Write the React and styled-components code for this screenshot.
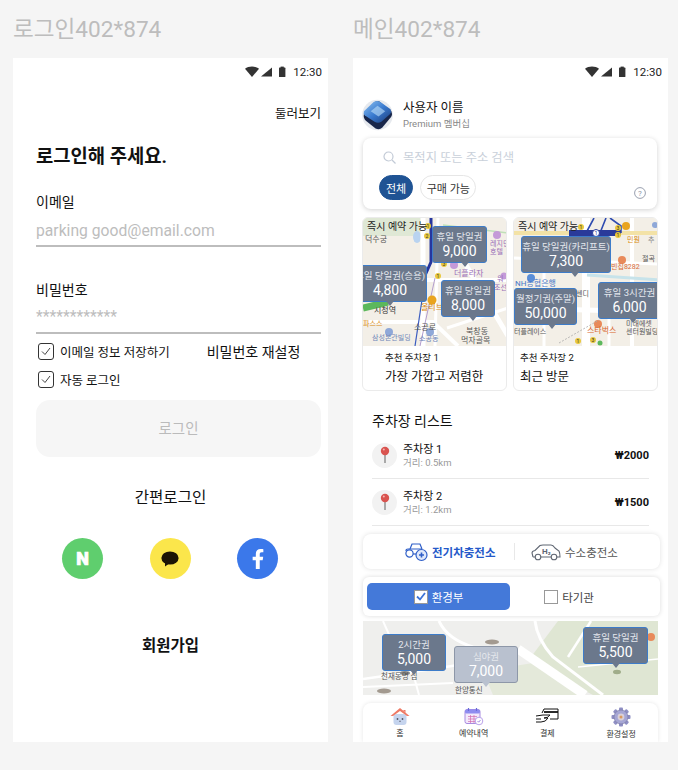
import React from 'react'
import styled, { createGlobalStyle } from 'styled-components'
import { FaFacebookF } from 'react-icons/fa'

const GlobalStyle = createGlobalStyle`
    html, body {
        margin: 0;
        padding: 0;
        background: #f5f5f5;
    }
    * {
        box-sizing: border-box;
    }
    body {
        font-family: Roboto, "Noto Sans CJK KR", sans-serif;
        color: #111;
    }
`

const Page = styled.div`
    width: 678px;
    height: 770px;
    padding: 0 10px 0 13px;
    display: flex;
    gap: 25px;
    overflow: hidden;
`

const Column = styled.div`
    width: 315px;
    flex: 0 0 auto;
`

const ArtboardTitle = styled.div`
    height: 58px;
    padding-top: 15px;
    font-size: 22.6px;
    line-height: 30px;
    color: #bdbdbd;
`

const Panel = styled.div`
    height: 684px;
    background: #fff;
    overflow: hidden;
`

const StatusRow = styled.div`
    height: 24px;
    padding: 4px 6px 0 0;
    display: flex;
    align-items: center;
    justify-content: flex-end;
    gap: 6px;
    font-size: 11.5px;
    color: #222;
`

/* login */

const LoginBody = styled.div`
    padding: 0 7px 0 23px;
`

const BrowseLink = styled.div`
    margin-top: 23px;
    text-align: right;
    font-size: 12.5px;
    line-height: 18px;
`

const LoginTitle = styled.h1`
    margin: 21px 0 0;
    font-size: 18.8px;
    line-height: 26px;
    font-weight: 700;
`

const FieldLabel = styled.div`
    margin-top: ${({ $top }) => $top}px;
    font-size: 14px;
    line-height: 20px;
`

const FieldValue = styled.div`
    height: ${({ $h }) => $h}px;
    padding-top: ${({ $pt }) => $pt || 0}px;
    display: flex;
    align-items: center;
    border-bottom: 2px solid #bdbdbd;
    font-size: 15.7px;
    color: #bdbdbd;
`

const CheckRow = styled.div`
    height: 28px;
    display: flex;
    align-items: center;
    font-size: 12.5px;
`

const CheckBox = styled.span`
    width: 16px;
    height: 17px;
    margin: 0 6px 0 2px;
    border: 1px solid #333;
    border-radius: 3px;
    display: flex;
    align-items: center;
    justify-content: center;
`

const ResetLink = styled.span`
    margin-left: 37px;
    font-size: 14px;
`

const CheckGroup = styled.div`
    margin-top: 3px;
`

const LoginButton = styled.div`
    height: 57px;
    margin-top: 7px;
    border-radius: 14px;
    background: #f6f6f6;
    color: #bbb;
    font-size: 14.5px;
    padding-bottom: 2px;
    display: flex;
    align-items: center;
    justify-content: center;
`

const SimpleLogin = styled.div`
    margin-top: 30px;
    padding-right: 16px;
    text-align: center;
    font-size: 15.6px;
    line-height: 22px;
`

const SocialRow = styled.div`
    margin-top: 29px;
    padding: 0 43px 0 26px;
    display: flex;
    justify-content: space-between;
`

const SocialCircle = styled.div`
    width: 41px;
    height: 41px;
    border-radius: 50%;
    background: ${({ $bg }) => $bg};
    color: #fff;
    display: flex;
    align-items: center;
    justify-content: center;
    font-size: ${({ $size }) => $size || 20}px;
    font-weight: 900;
`

const NaverLetter = styled.span`
    -webkit-text-stroke: 0.7px #fff;
`

const SignUp = styled.div`
    margin-top: 56px;
    padding-right: 16px;
    text-align: center;
    font-size: 15.5px;
    font-weight: 700;
    line-height: 22px;
`

/* main */

const ProfileRow = styled.div`
    margin-top: 17px;
    padding-left: 9px;
    display: flex;
    align-items: center;
    gap: 10px;
    height: 32px;
`

const ProfileName = styled.div`
    font-size: 12.5px;
    line-height: 17px;
`

const ProfileSub = styled.div`
    margin-top: 1px;
    font-size: 9.5px;
    line-height: 14px;
    color: #888;
`

const SearchCard = styled.div`
    margin: 7px 11px 0 10px;
    height: 71px;
    padding: 10px 11px 0 16px;
    border-radius: 8px;
    background: #fff;
    box-shadow: 0 1px 5px rgba(0, 0, 0, 0.18);
`

const SearchLine = styled.div`
    height: 18px;
    padding-left: 4px;
    display: flex;
    align-items: center;
    gap: 7px;
    font-size: 12.3px;
    color: #c9d0da;
`

const ChipRow = styled.div`
    margin-top: 9px;
    display: flex;
    align-items: center;
    gap: 7px;
`

const Chip = styled.div`
    height: 25px;
    padding: 0 ${({ $active }) => ($active ? 6 : 5.5)}px;
    border-radius: 13px;
    border: 1px solid ${({ $active }) => ($active ? '#1f5394' : '#e6e6e6')};
    background: ${({ $active }) => ($active ? '#1f5394' : '#fff')};
    color: ${({ $active }) => ($active ? '#fff' : '#333')};
    font-size: 11px;
    display: flex;
    align-items: center;
`

const HelpIcon = styled.div`
    margin: 10px 0 0 auto;
    display: flex;
`

const CardRow = styled.div`
    margin-top: 8px;
    padding: 0 10px 0 9px;
    display: flex;
    gap: 6px;
`

const PlaceCard = styled.div`
    width: 145px;
    height: 174px;
    border: 1px solid #ebebeb;
    border-radius: 6px;
    overflow: hidden;
    background: #fff;
`

const MapFrame = styled.div`
    position: relative;
    height: ${({ $h }) => $h}px;
    overflow: hidden;
    background: #f3efe7;

    & > svg {
        display: block;
    }
`

const InstantBadge = styled.span`
    position: absolute;
    left: 4px;
    top: 2px;
    font-size: 10px;
    line-height: 14px;
    color: #222;
`

const Bubble = styled.div`
    position: absolute;
    left: ${({ $x }) => $x}px;
    top: ${({ $y }) => $y}px;
    width: ${({ $w }) => $w}px;
    height: 37px;
    padding-top: 3px;
    border: 1px solid ${({ $muted }) => ($muted ? '#8d97a8' : '#3d7cc9')};
    border-radius: 3px;
    background: ${({ $muted }) => ($muted ? '#b9c1cf' : '#6b788c')};
    text-align: center;
    color: #fff;
    white-space: nowrap;

    &::after {
        content: '';
        position: absolute;
        left: calc(${({ $tip }) => $tip || 50}% - 4px);
        bottom: -5px;
        border-left: 4px solid transparent;
        border-right: 4px solid transparent;
        border-top: 5px solid ${({ $muted }) => ($muted ? '#b9c1cf' : '#6b788c')};
    }
`

const BubbleLabel = styled.div`
    font-size: 9.5px;
    line-height: 13px;
    color: #e4e7ec;
    margin: 0 -12px;
`

const BubblePrice = styled.div`
    font-size: 14px;
    line-height: 17px;
`

const CardText = styled.div`
    padding: 5px 0 0 ${({ $pad }) => $pad}px;
`

const CardEyebrow = styled.div`
    font-size: 9.5px;
    line-height: 14px;
`

const CardTitle = styled.div`
    margin-top: 3px;
    font-size: 12.5px;
    line-height: 18px;
`

const SectionTitle = styled.div`
    margin-top: 20px;
    padding-left: 19px;
    font-size: 14px;
    line-height: 20px;
`

const List = styled.div`
    margin: 1px 19px 0 19px;
`

const ListRow = styled.div`
    height: 47px;
    display: flex;
    align-items: center;
    border-bottom: 1px solid #e8e8e8;
`

const PinCircle = styled.div`
    width: 25px;
    height: 25px;
    margin-right: 6px;
    border-radius: 50%;
    background: #f2f2f2;
    display: flex;
    align-items: center;
    justify-content: center;
`

const RowName = styled.div`
    font-size: 11px;
    line-height: 15px;
`

const RowSub = styled.div`
    font-size: 9.5px;
    line-height: 12px;
    color: #999;
`

const RowPrice = styled.div`
    margin-left: auto;
    font-size: 11px;
    font-weight: 700;
`

const StationTabs = styled.div`
    margin: 8px 8px 0 10px;
    height: 35px;
    border-radius: 8px;
    background: #fff;
    box-shadow: 0 0 5px rgba(0, 0, 0, 0.12);
    display: flex;
    align-items: center;
`

const StationTab = styled.div`
    width: ${({ $w }) => $w}px;
    padding-left: ${({ $pad }) => $pad}px;
    display: flex;
    align-items: center;
    gap: 4px;
    font-size: 11.5px;
    font-weight: ${({ $active }) => ($active ? 700 : 400)};
    color: ${({ $active }) => ($active ? '#2459c9' : '#555')};
`

const TabRule = styled.div`
    width: 1px;
    height: 17px;
    background: #e8e8e8;
`

const AgencyToggle = styled.div`
    margin: 8px 8px 0 10px;
    height: 39px;
    padding: 6px 4px;
    border-radius: 6px;
    background: #fff;
    box-shadow: 0 0 5px rgba(0, 0, 0, 0.14);
    display: flex;
`

const AgencyOption = styled.div`
    width: ${({ $w }) => $w}px;
    flex: 0 0 auto;
    border-radius: 5px;
    background: ${({ $active }) => ($active ? '#4479d9' : '#fff')};
    color: ${({ $active }) => ($active ? '#fff' : '#444')};
    font-size: 11.5px;
    display: flex;
    align-items: center;
    justify-content: center;
    gap: 4px;
`

const AgencyBox = styled.span`
    width: 14px;
    height: 14px;
    border: 1px solid #999;
    background: #fff;
    display: flex;
    align-items: center;
    justify-content: center;
`

const WideMap = styled(MapFrame)`
    margin: 5px 10px 0 10px;
    background: #efefed;
`

const BottomNav = styled.div`
    margin: 8px 10px 0 10px;
    height: 39px;
    border-radius: 8px 8px 0 0;
    box-shadow: 0 0 4px rgba(0, 0, 0, 0.1);
    display: grid;
    grid-template-columns: repeat(4, 1fr);
`

const NavItem = styled.div`
    display: flex;
    flex-direction: column;
    align-items: center;
    padding-top: 4px;
    font-size: 8px;
    line-height: 11px;
    color: #333;

    & > svg {
        margin-bottom: 2px;
    }
`

const StatusIcons = () => (
    <svg width="42" height="12" viewBox="0 0 42 12">
        <path d="M0 2.8 C3.5 -0.2 10.5 -0.2 14 2.8 L7 11 Z" fill="#333" />
        <path d="M16 10.5 L27 10.5 L27 1.5 Z" fill="#333" />
        <rect x="34" y="1.6" width="6.4" height="9.4" rx="0.6" fill="#333" />
        <rect x="35.6" y="0.6" width="3.2" height="1.5" fill="#333" />
    </svg>
)

const Tick = () => (
    <svg width="10" height="9" viewBox="0 0 10 9">
        <path d="M1 4.5 L4 7.5 L9 1" fill="none" stroke="#444" strokeWidth="1" />
    </svg>
)

const Pin = () => (
    <svg width="10" height="18" viewBox="0 0 10 18">
        <path d="M5 8 L5 17" stroke="#8a8a8a" strokeWidth="1.4" />
        <circle cx="5" cy="5" r="4.2" fill="#d9534f" />
        <circle cx="3.8" cy="3.6" r="1" fill="#f3b5b2" />
    </svg>
)

const Avatar = () => (
    <svg width="31" height="32" viewBox="0 0 32 32">
        <defs>
            <linearGradient id="av" x1="0" y1="0" x2="1" y2="1">
                <stop offset="0" stopColor="#8fc2f0" />
                <stop offset="0.5" stopColor="#3a7bd0" />
                <stop offset="1" stopColor="#1a3a78" />
            </linearGradient>
        </defs>
        <circle cx="16" cy="16" r="15.8" fill="#e6e9ee" />
        <path d="M2 15 Q1 19 4 22 L14 30 Q18 32 21 29 L30 18 Q32 15 30 12 L18 2 Q15 1 13 3 Z" fill="#18264a" />
        <path d="M2 12 L12 2.5 Q15.5 0.5 19 2.5 L29.5 10 Q31 12.5 29 15 L20 23 Q16.5 25 13 23 L3 16.5 Q1 14.5 2 12 Z" fill="url(#av)" />
        <path d="M9 12 L16 6.5 L24 12 L17 17.5 Z" fill="#b5d8f6" opacity="0.65" />
    </svg>
)

const MapDot = ({ x, y, c, t }) => (
    <g>
        <circle cx={x} cy={y} r="3" fill={c} />
        {t && <text x={x} y={y + 2} fontSize="5" textAnchor="middle" fill="#333">{t}</text>}
    </g>
)

const MapText = ({ x, y, c = '#555', s = 7.5, children }) => (
    <text x={x} y={y} fontSize={s} fill={c}>{children}</text>
)

const CityMapOne = () => (
    <svg width="145" height="128" viewBox="0 0 145 128">
        <rect width="145" height="128" fill="#f3efe7" />
        <rect width="62" height="18" fill="#dfe8d5" />
        <ellipse cx="54" cy="19" rx="4" ry="6" fill="#b9d3f0" />
        <g stroke="#fff" fill="none">
            <path d="M60 0 L60 128" strokeWidth="5" />
            <path d="M0 62 L145 62" strokeWidth="4" />
            <path d="M100 42 L145 118" strokeWidth="5" />
            <path d="M0 104 L70 104 L95 128" strokeWidth="4" />
            <path d="M75 0 L72 128" strokeWidth="3" />
            <path d="M84 110 L145 90" strokeWidth="3" />
        </g>
        <path d="M80 7 L145 15" stroke="#bfe0b8" strokeWidth="1.5" fill="none" />
        <path d="M0 90 L25 84" stroke="#5cb85c" strokeWidth="7" fill="none" />
        <path d="M68 0 L68 44 L60 62" stroke="#26369e" strokeWidth="3" fill="none" />
        <path d="M62 62 L52 128" stroke="#3a5cc0" strokeWidth="1.2" fill="none" />
        <path d="M72 60 L57 128" stroke="#b29ccd" strokeWidth="1" fill="none" />
        <path d="M0 70 L8 82" stroke="#f0c27a" strokeWidth="6" fill="none" />
        <MapDot x={65} y={8} c="#e9c83b" t="1" />
        <MapDot x={64} y={18} c="#e9c83b" t="2" />
        <MapDot x={81} y={46} c="#e9c83b" t="3" />
        <MapDot x={75} y={58} c="#e9c83b" t="1" />
        <circle cx="134" cy="17" r="4" fill="#c49ad8" />
        <circle cx="91" cy="47" r="4" fill="#c49ad8" />
        <circle cx="69" cy="82" r="4.5" fill="#e9a41f" />
        <circle cx="26" cy="114" r="4" fill="#8fa8d8" />
        <circle cx="67" cy="114" r="4" fill="#8fa8d8" />
        <circle cx="141" cy="58" r="3.5" fill="#c49ad8" />
        <MapText x={2} y={24} s={8}>덕수궁</MapText>
        <MapText x={127} y={28} s={7} c="#9a6fb8">레지던스</MapText>
        <MapText x={127} y={36} s={7} c="#9a6fb8">호텔</MapText>
        <MapText x={91} y={58} s={8} c="#9a6fb8">더플라자</MapText>
        <MapText x={11} y={95} s={8} c="#333">시청역</MapText>
        <MapText x={58} y={92} s={8} c="#d98a10">올리브영</MapText>
        <MapText x={0} y={108} s={7} c="#d98a10">파스스</MapText>
        <MapText x={9} y={122} s={7} c="#6f86b8">삼성본관빌딩</MapText>
        <MapText x={56} y={123} s={7} c="#6f86b8">소공동</MapText>
        <MapText x={51} y={112} s={8}>소공로</MapText>
        <MapText x={103} y={116} s={8}>북창동</MapText>
        <MapText x={98} y={125} s={8}>먹자골목</MapText>
        <MapText x={134} y={63} s={7} c="#9a6fb8">워</MapText>
        <MapText x={131} y={72} s={7} c="#9a6fb8">조선</MapText>
    </svg>
)

const CityMapTwo = () => (
    <svg width="145" height="128" viewBox="0 0 145 128">
        <rect width="145" height="128" fill="#f3efe7" />
        <g stroke="#fff" fill="none">
            <path d="M72 0 L72 128" strokeWidth="8" />
            <path d="M0 40 L145 46" strokeWidth="3" />
            <path d="M0 90 L145 94" strokeWidth="5" />
            <path d="M118 0 L118 128" strokeWidth="4" />
            <path d="M30 40 L30 128" strokeWidth="3" />
            <path d="M95 96 L95 128" strokeWidth="3" />
        </g>
        <rect y="13" width="145" height="4" fill="#f3e2a6" />
        <path d="M73 57 L145 62" stroke="#c7e3ea" strokeWidth="3" fill="none" />
        <path d="M72 15 L80 0 M86 15 L92 0 M107 15 L107 8 L96 0" stroke="#2f4cb0" strokeWidth="1.6" fill="none" />
        <rect x="55" y="12" width="52" height="6" fill="#2a3a9a" />
        <circle cx="82" cy="15" r="3.5" fill="#fff" stroke="#2a3a9a" />
        <text x="82" y="17" fontSize="5.5" textAnchor="middle" fill="#2a3a9a">1</text>
        <MapDot x={67} y={9} c="#e9c83b" t="1" />
        <MapDot x={104} y={10} c="#e9c83b" t="3" />
        <MapDot x={104} y={17} c="#e9c83b" t="1" />
        <MapDot x={64} y={123} c="#e9c83b" t="1" />
        <MapDot x={79} y={122} c="#e9c83b" t="3" />
        <circle cx="86" cy="125" r="2.5" fill="#5cb85c" />
        <circle cx="112" cy="8" r="4" fill="#e9a41f" />
        <circle cx="108" cy="42" r="4" fill="#e88a5a" />
        <circle cx="17" cy="60" r="4" fill="#5a8ed8" />
        <circle cx="84" cy="106" r="4" fill="#e88a5a" />
        <circle cx="141" cy="7" r="3" fill="#8fa8d8" />
        <path d="M45 125 L85 102" stroke="#aaa" strokeWidth="0.8" strokeDasharray="2 1.5" fill="none" />
        <MapText x={113} y={24} s={7} c="#d98a10">민원</MapText>
        <MapText x={134} y={24} s={7} c="#888">추</MapText>
        <MapText x={128} y={43} s={7}>절곡</MapText>
        <MapText x={97} y={51} s={7} c="#d96a3a">빈집8282</MapText>
        <MapText x={1} y={68} s={8} c="#4a78c8">NH농협은행</MapText>
        <MapText x={62} y={78} s={7}>센디</MapText>
        <MapText x={0} y={116} s={7}>터플레이스</MapText>
        <MapText x={73} y={115} s={8} c="#d9662e">스타벅스</MapText>
        <MapText x={112} y={108} s={7}>미래에셋</MapText>
        <MapText x={112} y={116} s={7}>센터원빌딩</MapText>
    </svg>
)

const AreaMap = () => (
    <svg width="295" height="74" viewBox="0 0 295 74">
        <rect width="295" height="74" fill="#efefed" />
        <path d="M165 40 L195 0 L295 0 L295 74 L230 74 Z" fill="#dfe6d3" />
        <path d="M120 50 L170 42 L215 74 L130 74 Z" fill="#e4e9da" />
        <g stroke="#fff" fill="none">
            <path d="M155 28 L222 74" strokeWidth="9" />
            <path d="M76 0 Q84 18 110 26 L155 28" strokeWidth="3" />
            <path d="M172 0 Q174 18 190 36 L240 74" strokeWidth="3" />
            <path d="M228 0 Q214 22 205 36" strokeWidth="2.5" />
            <path d="M0 58 L70 48 L120 40" strokeWidth="2.5" />
            <path d="M0 66 L90 62" strokeWidth="2" />
            <path d="M20 0 L36 36 M50 52 L56 74" strokeWidth="2" />
            <path d="M215 46 L295 38" strokeWidth="1.5" />
        </g>
        <ellipse cx="129" cy="21" rx="7" ry="2.5" fill="#a39a90" />
        <ellipse cx="21" cy="70" rx="7" ry="2.5" fill="#a39a90" />
        <ellipse cx="254" cy="51" rx="4" ry="2.2" fill="#a0ad8a" />
        <ellipse cx="42" cy="52" rx="5" ry="2" fill="#888" />
        <circle cx="288" cy="16" r="4" fill="#e88a5a" />
        <MapText x={18} y={58} s={7.5}>천재동명 심</MapText>
        <MapText x={92} y={72} s={7.5}>한양통신</MapText>
    </svg>
)

const EvIcon = () => (
    <svg width="24" height="20" viewBox="0 0 24 20" fill="none" stroke="#2f5fc8" strokeWidth="1.2">
        <path d="M6 7 L8 2 L16 2 L18 7" />
        <path d="M2 9 Q2 7 4 7 L18 7" />
        <circle cx="5.5" cy="11.5" r="3.6" />
        <circle cx="17.5" cy="13" r="5.5" fill="#dfe8fb" />
        <path d="M15 13 L20 13 M17.5 10.5 L17.5 15.5" strokeWidth="1.6" />
        <path d="M9 12 L12 12" />
    </svg>
)

const H2Icon = () => (
    <svg width="30" height="18" viewBox="0 0 30 18" fill="none" stroke="#5f6672" strokeWidth="1.1">
        <path d="M2 14 L1 10 Q1 8 4 7.5 L9 2.5 Q10 2 12 2 L20 2 Q22 2 24 5 L28 8 Q29 10 29 14 L26 14 M20 14 L10 14 M4 14 L2 14" />
        <circle cx="7" cy="14" r="2.8" />
        <circle cx="23" cy="14" r="2.8" />
        <text x="11" y="11" fontSize="8" fontWeight="700" fill="#5f6672" stroke="none">H₂</text>
    </svg>
)

const HomeIcon = () => (
    <svg width="20" height="19" viewBox="0 0 20 19">
        <rect x="3.5" y="7" width="13" height="11" rx="3" fill="#c5d4ee" />
        <path d="M0.5 9 L10 1 L19.5 9 L17 9 L10 4 L3 9 Z" fill="#ee7a66" />
        <path d="M13 3 L15.5 3 L15.5 6 Z" fill="#ee7a66" />
        <circle cx="7.5" cy="12" r="0.9" fill="#556" />
        <circle cx="12.5" cy="12" r="0.9" fill="#556" />
        <path d="M9 14 Q10 15 11 14" stroke="#556" strokeWidth="0.7" fill="none" />
    </svg>
)

const CalendarIcon = () => (
    <svg width="20" height="19" viewBox="0 0 20 19">
        <rect x="1" y="2.5" width="15" height="14" rx="2" fill="#f3e9fb" stroke="#a78be0" />
        <rect x="1" y="2.5" width="15" height="4" rx="1.5" fill="#8f8cf0" />
        <path d="M4 9.5 L13 9.5 M4 12 L13 12 M4 14.5 L13 14.5 M6.5 8 L6.5 16 M10 8 L10 16" stroke="#d36fb0" strokeWidth="0.7" />
        <path d="M4.5 1 L4.5 4 M12.5 1 L12.5 4" stroke="#6a6ad8" strokeWidth="1.2" />
        <circle cx="15" cy="14" r="3.8" fill="#fff" stroke="#b9a2ea" />
        <path d="M13.5 14 L14.7 15.2 L16.5 13" stroke="#8a6fd8" strokeWidth="0.8" fill="none" />
    </svg>
)

const PayIcon = () => (
    <svg width="24" height="19" viewBox="0 0 24 19" fill="none" stroke="#111" strokeWidth="1">
        <path d="M7 6 L9 2 L23 2 L23 12 L15 12" />
        <path d="M9 5 L23 5" strokeWidth="1.8" />
        <path d="M1 9 L8 8 L15 8 Q13 11 9 11 L13 11 Q11 15 6 15 L1 15" />
        <path d="M1 12 L6 12" />
    </svg>
)

const GearIcon = () => (
    <svg width="20" height="20" viewBox="0 0 20 20">
        <g fill="#8f8fc4">
            {[0, 45, 90, 135, 180, 225, 270, 315].map((a) => (
                <rect key={a} x="8" y="0.5" width="4" height="5" rx="1" transform={`rotate(${a} 10 10)`} />
            ))}
        </g>
        <circle cx="10" cy="10" r="7" fill="#a6a6d4" stroke="#77779f" strokeWidth="0.6" />
        <circle cx="10" cy="10" r="3.4" fill="#d9d0d8" />
        <circle cx="10" cy="10" r="1.5" fill="#d99a5f" />
    </svg>
)

const Price = ({ x, y, w, tip, muted, label, price }) => (
    <Bubble $x={x} $y={y} $w={w} $tip={tip} $muted={muted}>
        <BubbleLabel>{label}</BubbleLabel>
        <BubblePrice>{price}</BubblePrice>
    </Bubble>
)

const PLACES = [
    {
        map: <CityMapOne />,
        pad: 22,
        eyebrow: '추천 주차장 1',
        title: '가장 가깝고 저렴한',
        bubbles: [
            { x: 69, y: 8, w: 55, tip: 61, label: '휴일 당일권', price: '9,000' },
            { x: -10, y: 47, w: 74, tip: 50, label: '휴일 당일권(승용)', price: '4,800' },
            { x: 78, y: 62, w: 54, tip: 60, label: '휴일 당일권', price: '8,000' },
        ],
    },
    {
        map: <CityMapTwo />,
        pad: 6,
        eyebrow: '추천 주차장 2',
        title: '최근 방문',
        bubbles: [
            { x: 7, y: 18, w: 90, tip: 60, label: '휴일 당일권(카리프트)', price: '7,300' },
            { x: 0, y: 70, w: 63, tip: 60, label: '월정기권(주말)', price: '50,000' },
            { x: 84, y: 64, w: 63, tip: 55, label: '휴일 3시간권', price: '6,000' },
        ],
    },
]

const App = () => (
    <Page>
        <GlobalStyle />
        <Column>
            <ArtboardTitle>로그인402*874</ArtboardTitle>
            <Panel>
                <StatusRow>
                    <StatusIcons />
                    <span>12:30</span>
                </StatusRow>
                <LoginBody>
                    <BrowseLink>둘러보기</BrowseLink>
                    <LoginTitle>로그인해 주세요.</LoginTitle>
                    <FieldLabel $top={22}>이메일</FieldLabel>
                    <FieldValue $h={35} $pt={3}>parking good@email.com</FieldValue>
                    <FieldLabel $top={33}>비밀번호</FieldLabel>
                    <FieldValue $h={34}>************</FieldValue>
                    <CheckGroup>
                        <CheckRow>
                            <CheckBox><Tick /></CheckBox>
                            이메일 정보 저장하기
                            <ResetLink>비밀번호 재설정</ResetLink>
                        </CheckRow>
                        <CheckRow>
                            <CheckBox><Tick /></CheckBox>
                            자동 로그인
                        </CheckRow>
                    </CheckGroup>
                    <LoginButton>로그인</LoginButton>
                    <SimpleLogin>간편로그인</SimpleLogin>
                    <SocialRow>
                        <SocialCircle $bg="#5fce6e" $size={18}><NaverLetter>N</NaverLetter></SocialCircle>
                        <SocialCircle $bg="#fbe64b">
                            <svg width="18" height="16" viewBox="0 0 18 16">
                                <ellipse cx="9" cy="7" rx="8.6" ry="6.6" fill="#1c1505" />
                                <path d="M4 11 L4 15.5 L9 12 Z" fill="#1c1505" />
                            </svg>
                        </SocialCircle>
                        <SocialCircle $bg="#3b78ea"><FaFacebookF /></SocialCircle>
                    </SocialRow>
                    <SignUp>회원가입</SignUp>
                </LoginBody>
            </Panel>
        </Column>
        <Column>
            <ArtboardTitle>메인402*874</ArtboardTitle>
            <Panel>
                <StatusRow>
                    <StatusIcons />
                    <span>12:30</span>
                </StatusRow>
                <ProfileRow>
                    <Avatar />
                    <div>
                        <ProfileName>사용자 이름</ProfileName>
                        <ProfileSub>Premium 멤버십</ProfileSub>
                    </div>
                </ProfileRow>
                <SearchCard>
                    <SearchLine>
                        <svg width="13" height="13" viewBox="0 0 13 13" fill="none" stroke="#c2cad6" strokeWidth="1.2">
                            <circle cx="5.5" cy="5.5" r="4.5" />
                            <path d="M9 9 L12.5 12.5" />
                        </svg>
                        목적지 또는 주소 검색
                    </SearchLine>
                    <ChipRow>
                        <Chip $active>전체</Chip>
                        <Chip>구매 가능</Chip>
                        <HelpIcon>
                            <svg width="12" height="12" viewBox="0 0 12 12">
                                <circle cx="6" cy="6" r="5.4" fill="none" stroke="#8d95a6" strokeWidth="0.9" />
                                <text x="6" y="8.6" fontSize="8" textAnchor="middle" fill="#8d95a6">?</text>
                            </svg>
                        </HelpIcon>
                    </ChipRow>
                </SearchCard>
                <CardRow>
                    {PLACES.map((place) => (
                        <PlaceCard key={place.eyebrow}>
                            <MapFrame $h={128}>
                                {place.map}
                                <InstantBadge>즉시 예약 가능</InstantBadge>
                                {place.bubbles.map((b) => <Price key={b.price} {...b} />)}
                            </MapFrame>
                            <CardText $pad={place.pad}>
                                <CardEyebrow>{place.eyebrow}</CardEyebrow>
                                <CardTitle>{place.title}</CardTitle>
                            </CardText>
                        </PlaceCard>
                    ))}
                </CardRow>
                <SectionTitle>주차장 리스트</SectionTitle>
                <List>
                    <ListRow>
                        <PinCircle><Pin /></PinCircle>
                        <div>
                            <RowName>주차장 1</RowName>
                            <RowSub>거리: 0.5km</RowSub>
                        </div>
                        <RowPrice>₩2000</RowPrice>
                    </ListRow>
                    <ListRow>
                        <PinCircle><Pin /></PinCircle>
                        <div>
                            <RowName>주차장 2</RowName>
                            <RowSub>거리: 1.2km</RowSub>
                        </div>
                        <RowPrice>₩1500</RowPrice>
                    </ListRow>
                </List>
                <StationTabs>
                    <StationTab $active $w={151} $pad={41}><EvIcon />전기차충전소</StationTab>
                    <TabRule />
                    <StationTab $w={140} $pad={16}><H2Icon />수소충전소</StationTab>
                </StationTabs>
                <AgencyToggle>
                    <AgencyOption $active $w={143}>
                        <AgencyBox>
                            <svg width="10" height="9" viewBox="0 0 10 9">
                                <path d="M1 4.5 L4 7.5 L9 1" fill="none" stroke="#3d74d6" strokeWidth="1.8" />
                            </svg>
                        </AgencyBox>
                        환경부
                    </AgencyOption>
                    <AgencyOption $w={118}>
                        <AgencyBox />
                        타기관
                    </AgencyOption>
                </AgencyToggle>
                <WideMap $h={74}>
                    <AreaMap />
                    <Price x={19} y={13} w={64} tip={50} label="2시간권" price="5,000" />
                    <Price x={91} y={25} w={64} tip={50} muted label="심야권" price="7,000" />
                    <Price x={220} y={6} w={65} tip={50} label="휴일 당일권" price="5,500" />
                </WideMap>
                <BottomNav>
                    <NavItem><HomeIcon />홈</NavItem>
                    <NavItem><CalendarIcon />예약내역</NavItem>
                    <NavItem><PayIcon />결제</NavItem>
                    <NavItem><GearIcon />환경설정</NavItem>
                </BottomNav>
            </Panel>
        </Column>
    </Page>
)

export default App
